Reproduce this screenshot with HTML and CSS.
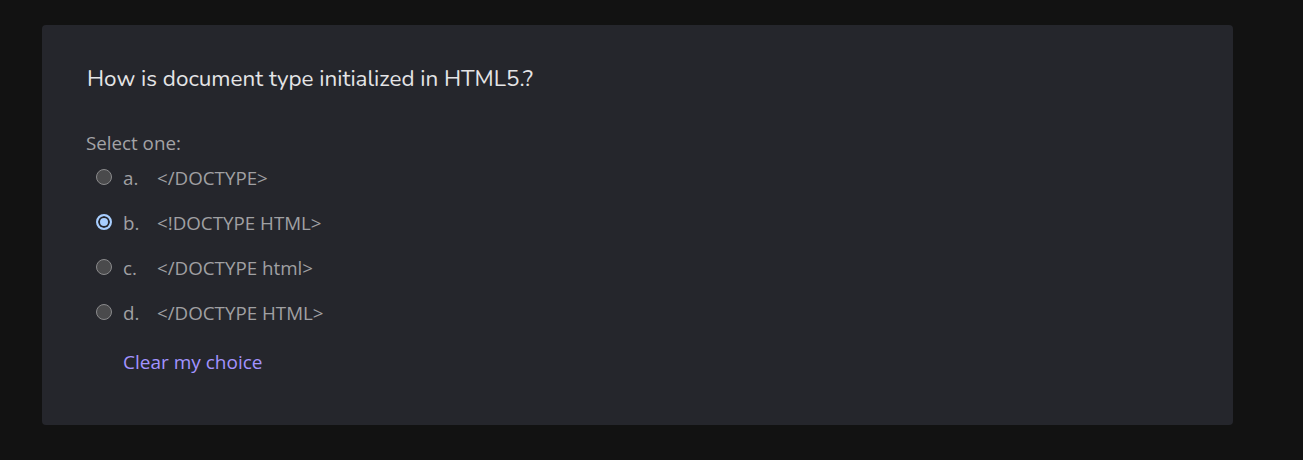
FILE: index.html
```html
<!DOCTYPE html>
<html lang="en">
<head>
<meta charset="utf-8">
<link rel="stylesheet" href="styles.css">
</head>
<body>
<div class="page">
  <div class="card">
    <div class="qtext">How is document type initialized in HTML5.?</div>
    <div class="prompt">Select one:</div>
    <div class="answers">
      <label class="opt"><span class="radio"></span><span class="letter">a.</span><span class="atext">&lt;/DOCTYPE&gt;</span></label>
      <label class="opt"><span class="radio checked"></span><span class="letter">b.</span><span class="atext">&lt;!DOCTYPE HTML&gt;</span></label>
      <label class="opt"><span class="radio"></span><span class="letter">c.</span><span class="atext">&lt;/DOCTYPE html&gt;</span></label>
      <label class="opt"><span class="radio"></span><span class="letter">d.</span><span class="atext">&lt;/DOCTYPE HTML&gt;</span></label>
    </div>
    <div class="clear"><a class="clear-link">Clear my choice</a></div>
  </div>
</div>
</body>
</html>
```
FILE: styles.css
```css
html, body {
  margin: 0;
  padding: 0;
  background: #121212;
}
.page {
  padding: 25px 70px 35px 42px;
  font-family: "Open Sans", "Liberation Sans", sans-serif;
}
.card {
  width: 1191px;
  height: 400px;
  box-sizing: border-box;
  background: #25262c;
  border-radius: 4px;
  padding: 39px 45px 0 44px;
}
.qtext {
  font-family: "Nunito", "Lato", "Open Sans", sans-serif;
  font-size: 22.45px;
  line-height: 30px;
  color: #e4e4e6;
  height: 30px;
  padding-left: 1px;
}
.prompt {
  margin-top: 35px;
  font-size: 18.75px;
  line-height: 28px;
  color: #a3a3a6;
}
.answers {
  display: flex;
  flex-direction: column;
  gap: 17px;
  margin-top: 6px;
  padding-left: 10px;
}
.opt {
  display: flex;
  align-items: center;
  height: 28px;
  font-size: 18.75px;
  color: #a0a0a3;
}
.radio {
  width: 16px;
  height: 16px;
  box-sizing: border-box;
  border-radius: 50%;
  background: #4a4a4c;
  border: 1px solid #8a8a8c;
  margin-right: 11px;
}
.radio.checked {
  background: #a8ceff;
  border: 2px solid #a8ceff;
  box-shadow: inset 0 0 0 2px #25262c;
}
.letter {
  width: 34px;
}
.clear {
  margin-top: 22px;
  padding-left: 37px;
  font-size: 19px;
  line-height: 28px;
}
.clear-link {
  color: #a293ff;
}
```
